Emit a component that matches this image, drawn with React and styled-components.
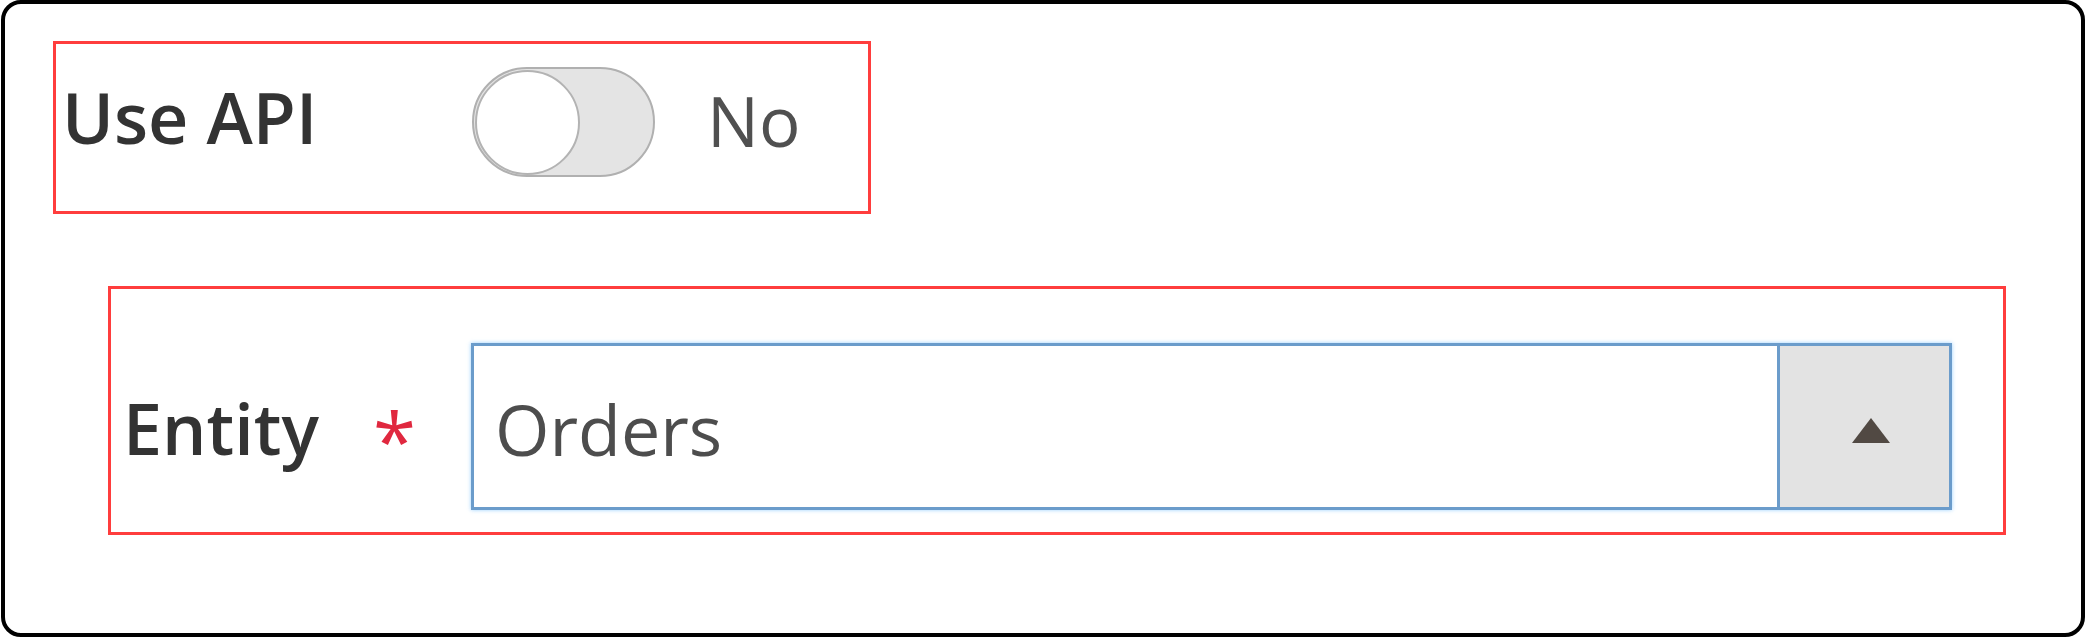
import React from "react";
import styled, { createGlobalStyle } from "styled-components";

const Global = createGlobalStyle`
  html, body { margin: 0; padding: 0; background: #ffffff; }
  body { font-family: "Open Sans", "Noto Sans", "Liberation Sans", sans-serif; }
  * { box-sizing: border-box; }
`;

const Card = styled.div`
  margin-left: 1px;
  width: 2084px;
  height: 637px;
  border: 4px solid #000;
  border-radius: 20px;
  background: #fff;
  display: flex;
  flex-direction: column;
  align-items: flex-start;
  padding: 37px 0 0 48px;
`;

const FieldFrame = styled.div`
  display: flex;
  align-items: flex-start;
  width: ${(p) => p.$w}px;
  height: ${(p) => p.$h}px;
  margin-left: ${(p) => p.$ml || 0}px;
  margin-top: ${(p) => p.$mt || 0}px;
  padding-top: ${(p) => p.$pt}px;
  border: 3px solid #ff3d3d;
`;

const LabelCell = styled.div`
  display: flex;
  align-items: flex-start;
  flex: none;
  width: ${(p) => p.$w}px;
  padding-left: ${(p) => p.$pl}px;
`;

const LabelText = styled.span`
  font-size: 70px;
  font-weight: 600;
  line-height: normal;
  color: #333333;
  margin-top: ${(p) => p.$mt}px;
  white-space: nowrap;
`;

const Required = styled.span`
  font-size: 78px;
  line-height: normal;
  color: #e0283f;
  margin-left: ${(p) => p.$ml}px;
  margin-top: 44px;
`;

const Toggle = styled.span`
  flex: none;
  display: flex;
  align-items: center;
  width: 183px;
  height: 110px;
  padding: 0 1px;
  border: 2px solid #b0b0b0;
  border-radius: 60px;
  background: #e4e4e4;
`;

const Knob = styled.span`
  width: 105px;
  height: 105px;
  border: 2px solid #b3b3b3;
  border-radius: 50%;
  background: #fff;
`;

const ValueText = styled.span`
  font-size: 69px;
  line-height: normal;
  color: #505050;
  margin-left: 52px;
  margin-top: 6px;
`;

const Select = styled.div`
  flex: none;
  display: flex;
  width: 1481px;
  height: 167px;
  border: 3px solid #6b9ccb;
  box-shadow: 0 0 4px rgba(110, 190, 255, 0.7);
`;

const SelectValue = styled.div`
  flex: 1;
  display: flex;
  align-items: center;
  padding: 4px 0 0 21px;
  font-size: 70px;
  color: #4d4d4d;
`;

const SelectButton = styled.div`
  flex: none;
  width: 172px;
  display: flex;
  align-items: center;
  justify-content: center;
  padding: 8px 0 0 12px;
  border-left: 3px solid #6b9ccb;
  background: #e3e3e3;
`;

const Caret = () => (
  <svg width="38" height="25" viewBox="0 0 38 25" aria-hidden="true">
    <path d="M19 0 L38 25 L0 25 Z" fill="#514943" />
  </svg>
);

export default function App() {
  return (
    <>
      <Global />
      <Card>
        <FieldFrame $w={818} $h={173} $pt={23}>
          <LabelCell $w={416} $pl={6}>
            <LabelText $mt={2}>Use API</LabelText>
          </LabelCell>
          <Toggle>
            <Knob />
          </Toggle>
          <ValueText>No</ValueText>
        </FieldFrame>
        <FieldFrame $w={1898} $h={249} $ml={55} $mt={72} $pt={54}>
          <LabelCell $w={360} $pl={12}>
            <LabelText $mt={37}>Entity</LabelText>
            <Required $ml={54}>*</Required>
          </LabelCell>
          <Select>
            <SelectValue>Orders</SelectValue>
            <SelectButton>
              <Caret />
            </SelectButton>
          </Select>
        </FieldFrame>
      </Card>
    </>
  );
}
